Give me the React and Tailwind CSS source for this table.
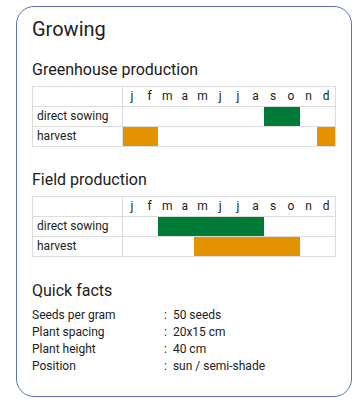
const MONTHS = ['j', 'f', 'm', 'a', 'm', 'j', 'j', 'a', 's', 'o', 'n', 'd'];

const GREEN = 'bg-[#007a37]';
const ORANGE = 'bg-[#e39300]';

const greenhouse = [
  { label: 'direct sowing', bars: [{ from: 8, to: 10, color: GREEN }] },
  {
    label: 'harvest',
    bars: [
      { from: 0, to: 2, color: ORANGE },
      { from: 11, to: 12, color: ORANGE },
    ],
  },
];

const field = [
  { label: 'direct sowing', bars: [{ from: 2, to: 8, color: GREEN }] },
  { label: 'harvest', bars: [{ from: 4, to: 10, color: ORANGE }] },
];

const facts = [
  ['Seeds per gram', '50 seeds'],
  ['Plant spacing', '20x15 cm'],
  ['Plant height', '40 cm'],
  ['Position', 'sun / semi-shade'],
];

const Calendar = ({ rows }) => (
  <div className="mt-[6px] border-t border-l border-r border-[#dcdcdc] text-[12px] leading-[19px]">
    {/* month header */}
    <div className="flex h-[20px] border-b border-[#dcdcdc]">
      <div className="w-[90px] shrink-0 border-r border-[#dcdcdc]" />
      <div className="grid flex-1 grid-cols-12">
        {MONTHS.map((m, i) => (
          <span key={i} className="text-center">
            {m}
          </span>
        ))}
      </div>
    </div>
    {rows.map((row) => (
      <div key={row.label} className="flex h-[20px] border-b border-[#dcdcdc]">
        <div className="w-[90px] shrink-0 border-r border-[#dcdcdc] pl-[4px]">{row.label}</div>
        <div className="relative flex-1">
          {row.bars.map((b, i) => (
            <div
              key={i}
              className={`absolute inset-y-0 ${b.color}`}
              style={{ left: `${(b.from / 12) * 100}%`, width: `${((b.to - b.from) / 12) * 100}%` }}
            />
          ))}
        </div>
      </div>
    ))}
  </div>
);

export default function App() {
  return (
    <div className="pt-[6px] pl-4 font-['Roboto',_'Liberation_Sans',_sans-serif] text-[#212121]">
      <div className="w-[336px] rounded-[18px] border border-[#5b74b8] bg-white px-[15px] pt-[10px] pb-[21px]">
        <h2 className="text-[20px] leading-[24px]">Growing</h2>

        <h3 className="mt-[19px] text-[16px] leading-[20px]">Greenhouse production</h3>
        <Calendar rows={greenhouse} />

        <h3 className="mt-[23px] text-[16px] leading-[20px]">Field production</h3>
        <Calendar rows={field} />

        <h3 className="mt-[24px] text-[16px] leading-[20px]">Quick facts</h3>
        <div className="mt-[6px] text-[12px] leading-[17px]">
          {facts.map(([k, v]) => (
            <div key={k} className="flex">
              <span className="w-[132px] shrink-0">{k}</span>
              <span>:</span>
              <span className="ml-[6px]">{v}</span>
            </div>
          ))}
        </div>
      </div>
    </div>
  );
}
